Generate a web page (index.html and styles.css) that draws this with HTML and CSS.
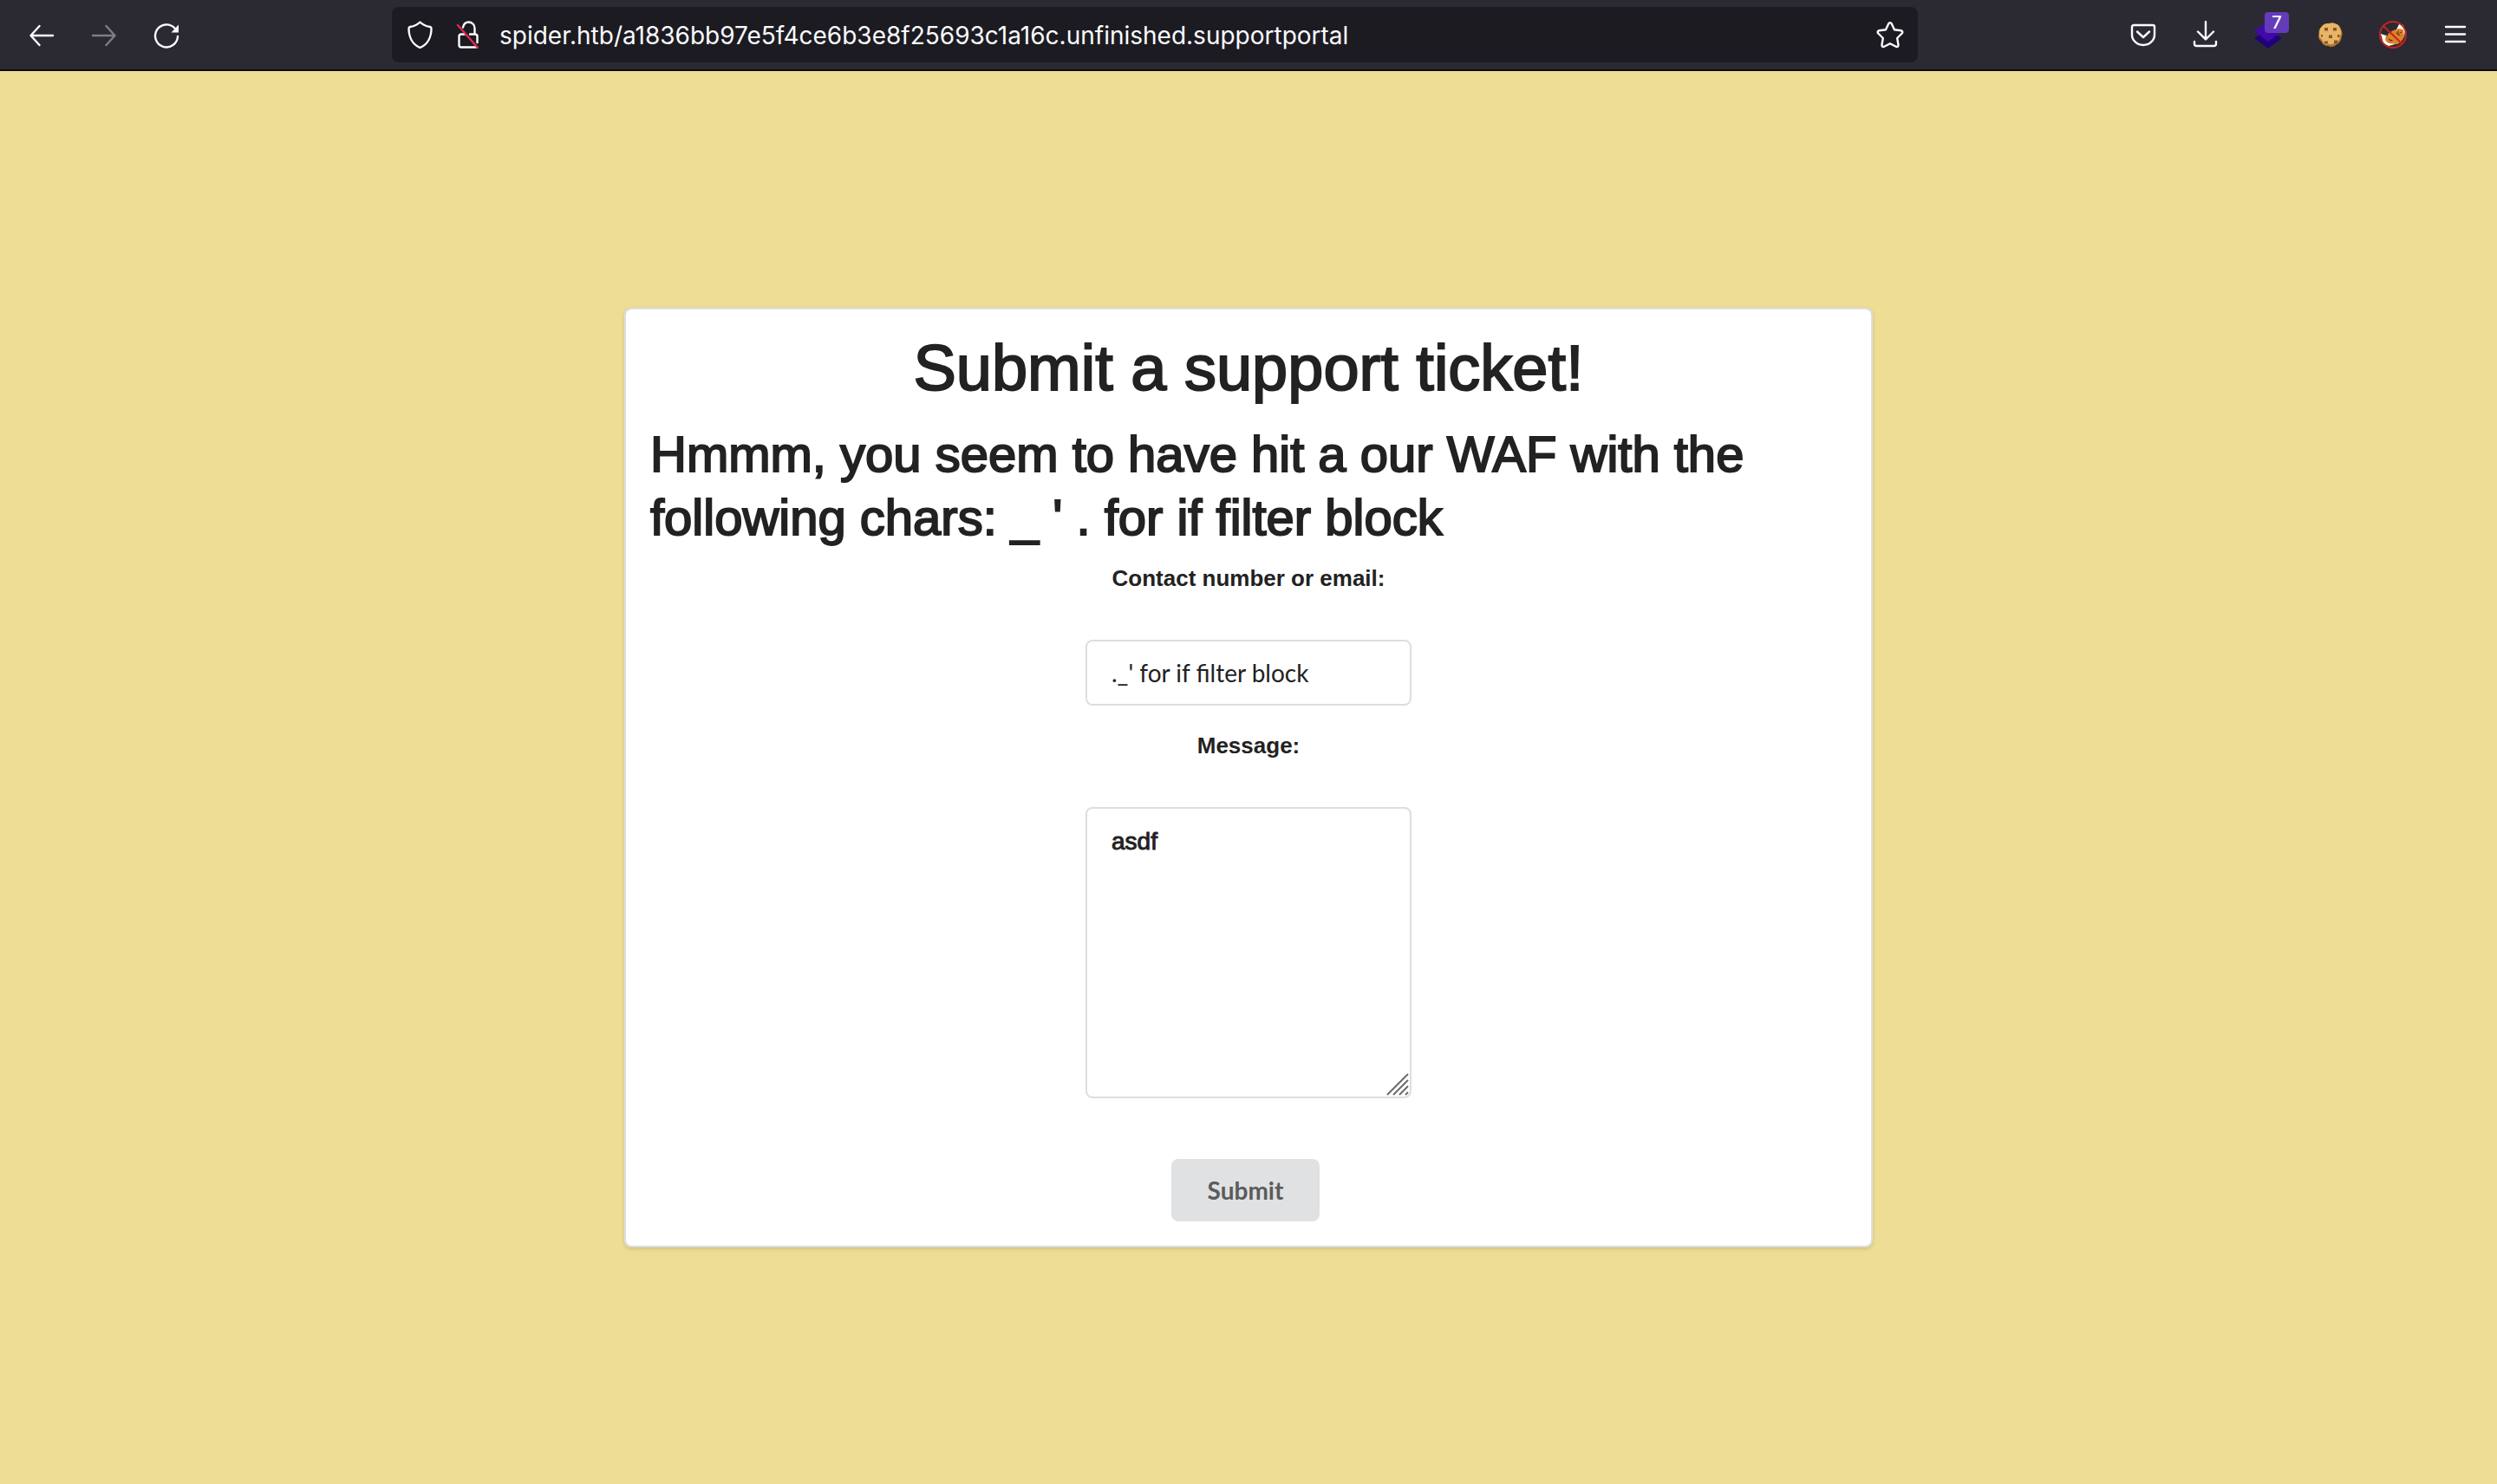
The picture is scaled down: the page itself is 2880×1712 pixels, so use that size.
FILE: index.html
```html
<!DOCTYPE html>
<html lang="en">
<head>
<meta charset="utf-8">
<title>Support portal</title>
<link rel="stylesheet" href="styles.css">
</head>
<body>
<header class="toolbar">
  <nav class="tool-group" aria-label="Navigation">
    <button class="tool" type="button" aria-label="Back"><svg class="icon" viewBox="0 0 32 32"><path d="M29 17H4M13.500 6 3.500 17l10 11"/></svg></button>
    <button class="tool" type="button" aria-label="Forward" disabled><svg class="icon" viewBox="0 0 32 32"><path d="M3 17h25M18.500 6l10 11-10 11"/></svg></button>
    <button class="tool" type="button" aria-label="Reload"><svg class="icon" viewBox="0 0 32 32"><path d="M29 18a13 13 0 1 1-3.500-9.500"/><path class="solid" d="M30 4.500V13.500H21.500z"/></svg></button>
  </nav>
  <div class="urlbar">
    <button class="tool" type="button" aria-label="Tracking protection"><svg class="icon" viewBox="0 0 32 32"><path d="M16.500 1.500C13 5 8 6.500 5 7c-1 .2-1.500.8-1.500 1.800C3.500 19 8 27.500 16.500 31 25 27.500 29.500 19 29.500 8.800c0-1-.5-1.600-1.500-1.800-3-.5-8-2-11.500-5.500z"/></svg></button>
    <button class="tool" type="button" aria-label="Connection not secure"><svg class="icon" viewBox="0 0 32 32"><path d="M10 7.500C11 3 13.500 1.500 16.500 1.500c4 0 7 3 7 7V15M12 15.500H8a2.500 2.500 0 0 0-2.500 2.500v10a2.500 2.500 0 0 0 2.500 2.500h17M18 15.500h6a2.500 2.500 0 0 1 2.500 2.500v7"/><path class="slash" d="M4 5l23 26"/></svg></button>
    <input class="address" type="text" aria-label="Address" value="spider.htb/a1836bb97e5f4ce6b3e8f25693c1a16c.unfinished.supportportal">
    <button class="tool" type="button" aria-label="Bookmark"><svg class="icon" viewBox="0 0 32 32"><path d="M14.300 3.200c.7-1.500 2.700-1.500 3.400 0l3.300 7 7.700 1.100c1.600.2 2.200 2.100 1 3.200L24.200 20l1.300 7.800c.3 1.600-1.300 2.700-2.700 2L16 26.200l-6.800 3.600c-1.400.7-3-.4-2.700-2L7.800 20l-5.500-5.500c-1.200-1.100-.6-3 1-3.200L11 10.200z"/></svg></button>
  </div>
  <div class="tool-group">
    <button class="tool" type="button" aria-label="Save to Pocket"><svg class="icon" viewBox="0 0 32 32"><path d="M5 5h22a2 2 0 0 1 2 2v9a13 12 0 0 1-26 0V7a2 2 0 0 1 2-2zM9 12.500l7 6.500 7-6.500"/></svg></button>
    <button class="tool" type="button" aria-label="Downloads"><svg class="icon" viewBox="0 0 32 32"><path d="M16 1v20M7 12.500l9 9 9-9M3 24v2.500A2.500 2.500 0 0 0 5.500 29h20a2.500 2.500 0 0 0 2.500-2.500V24"/></svg></button>
    <button class="tool" type="button" aria-label="Technology profiler"><svg class="icon layers" viewBox="0 0 32 32"><path class="layer-low" d="M0 20l8-5h16l8 5-16 12z"/><path class="layer-top" d="M0 12L16 0l16 12-16 12z"/></svg><span class="badge">7</span></button>
    <button class="tool" type="button" aria-label="Cookie editor"><svg class="icon cookie" viewBox="0 0 32 32"><path class="crust" d="M14 3c3-1 6-.5 8 .5 3 .5 5 3 6 6 2 3 2 7 .5 10-.5 4-3 7-6 8-3 3-6 3-9 1.500-4 0-7-2-8-5-3-2-4-5-3-9-.5-3 .5-6 3-8 2-3 5-4.500 8.500-4z"/><path class="dough" d="M14 3c3-1 6-.5 8 .5 3 .5 4 3 5 6 2 3 1 6 0 9-.5 4-3 6-6 7-3 2-6 2-8 1-4 0-6-2-7-5-3-2-3.500-5-2.500-8-.5-3 .5-5 2.500-7 2-2.500 5-4 8-3.500z"/><path class="chips" d="M9 8h4v3.500H9zM19 8h4v3.500h-4zM14 16.500h4V20h-4zM24 16h2.500v3H24zM5 16h2v2.500H5zM9 23.500h4V26H9zM20 22.500h4V26h-4z"/></svg></button>
    <button class="tool" type="button" aria-label="Fox blocker"><svg class="icon fox" viewBox="0 0 32 32"><path class="fur-light" d="M2 15l6 2 12-7 3-6 5 1 2 7-1 6-7 8-11 3-6-3z"/><path class="fur" d="M8 18c3-4 6-6 11-8l4-1 5 1 1 7c-1 5-4 8-8 10-3-1-6 0-9-1-4-1-6-4-4-8z"/><path class="face" d="M11 21l4 2M12 23l3-.5M20 14l4 3M22 12v4M26 13l-2 1M19 27l3 1M9 18l1-2"/><circle class="ban" cx="16" cy="16" r="15"/><path class="ban" d="M5 6l21 20"/></svg></button>
    <button class="tool" type="button" aria-label="Menu"><svg class="icon" viewBox="0 0 32 32"><path d="M5 7h22M5 15.500h22M5 24h22"/></svg></button>
  </div>
</header>
<main class="page">
  <form class="card">
    <h1 class="title">Submit a support ticket!</h1>
    <h2 class="notice">Hmmm, you seem to have hit a our WAF with the following chars: _ ' . for if filter block</h2>
    <div class="field">
      <label class="label" for="contact">Contact number or email:</label>
      <input class="control" id="contact" type="text" value="._' for if filter block">
    </div>
    <div class="field">
      <label class="label" for="message">Message:</label>
      <div class="area">
        <textarea class="control message" id="message">asdf</textarea>
        <svg class="grip" viewBox="0 0 26 26" aria-hidden="true"><path d="M1 25L25 1M8 25L25 8M15 25l10-10M22 25l3-3"/></svg>
      </div>
    </div>
    <button class="submit" type="button">Submit</button>
  </form>
</main>
</body>
</html>
```
FILE: styles.css
```css
* { box-sizing: border-box; }

body {
  display: flex;
  flex-direction: column;
  min-height: 100vh;
  margin: 0;
  background: #eedd94;
  color: #222;
  font-family: "Liberation Sans", Arial, sans-serif;
}

/* Browser toolbar */
.toolbar {
  display: flex;
  align-items: center;
  height: 82px;
  padding: 0 32px;
  border-bottom: 2px solid #0c0c0d;
  background: #2b2a33;
  color: #fbfbfe;
}
.tool-group { display: flex; gap: 40px; }
.tool {
  position: relative;
  display: block;
  flex: none;
  width: 32px;
  height: 32px;
  padding: 0;
  border: 0;
  background: none;
  color: inherit;
}
.tool:disabled { opacity: .4; }
.icon {
  display: block;
  width: 32px;
  height: 32px;
  fill: none;
  stroke: currentColor;
  stroke-width: 2.4;
  stroke-linecap: round;
  stroke-linejoin: round;
}
.solid { fill: currentColor; stroke: none; }
.slash { stroke: #e22850; }
.urlbar {
  display: flex;
  flex: 1;
  align-items: center;
  gap: 24px;
  height: 64px;
  margin: 0 244px;
  padding: 0 16px;
  border-radius: 8px;
  background: #1c1b22;
}
.address {
  flex: 1;
  min-width: 0;
  height: 48px;
  margin-left: -4px;
  padding: 2px 0 0;
  border: 0;
  background: none;
  color: inherit;
  font: 28px/46px Inter, sans-serif;
}

.layers, .cookie, .fox { stroke: none; }
.layer-low { fill: #21007d; }
.layer-top { fill: #4209a8; }
.badge {
  position: absolute;
  top: -10px;
  left: 12px;
  width: 28px;
  height: 24px;
  border-radius: 4px;
  background: #643cba;
  color: #fff;
  font: 500 20px/24px Inter, sans-serif;
  text-align: center;
}
.crust { fill: #b87631; }
.dough { fill: #e6b566; }
.chips { fill: #8b5428; }
.fur-light { fill: #fff; }
.fur { fill: #dc8329; }
.face { stroke: #48301c; stroke-width: 1; }
.ban { fill: none; stroke: #c4231d; stroke-width: 2; }

/* Support form */
.page {
  display: flex;
  flex: 1;
  align-items: center;
  justify-content: center;
}
.card {
  display: flex;
  flex-direction: column;
  align-items: center;
  width: 50%;
  padding: 22px 28px 28px;
  border: 2px solid #dededf;
  border-radius: 8px;
  background: #fff;
  background-clip: padding-box;
  box-shadow: 0 2px 4px rgba(34, 36, 38, .15);
}
.title, .notice {
  margin: 0;
  font-weight: 400;
  -webkit-text-stroke: 2px currentColor;
}
.title { font-size: 74px; line-height: 92px; }
.notice {
  width: 100%;
  margin: 16px 0;
  font-size: 58px;
  line-height: 73px;
}
.field {
  display: flex;
  flex-direction: column;
  align-items: center;
  gap: 53px;
  margin-bottom: 28px;
}
.label { font-size: 26px; font-weight: 700; line-height: 36px; }
.control {
  display: block;
  width: 376px;
  height: 76px;
  padding: 0 28px;
  border: 2px solid #dededf;
  border-radius: 8px;
  background: #fff;
  color: #222;
  font: 28px/36px Lato, sans-serif;
  text-rendering: optimizeLegibility;
}
.area { position: relative; }
.message {
  height: 336px;
  padding-top: 20px;
  font-family: "Liberation Sans", Arial, sans-serif;
  -webkit-text-stroke: 1px currentColor;
  resize: none;
}
.grip {
  position: absolute;
  right: 3px;
  bottom: 3px;
  width: 26px;
  height: 26px;
  fill: none;
  stroke: #6b6b6b;
  stroke-width: 2;
}
.submit {
  height: 72px;
  margin: 42px 7px 0 0;
  padding: 0 42px;
  border: 0;
  border-radius: 8px;
  background: #e0e1e2;
  color: #5a5b5c;
  font: 700 28px/36px Lato, sans-serif;
}
```
